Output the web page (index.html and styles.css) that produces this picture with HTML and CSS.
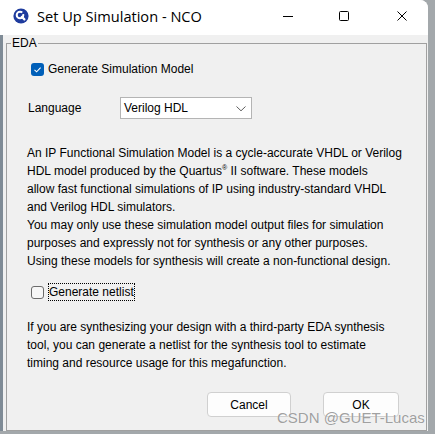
FILE: index.html
```html
<!DOCTYPE html>
<html>
<head>
<meta charset="utf-8">
<title>Set Up Simulation - NCO</title>
<link rel="stylesheet" href="styles.css">
</head>
<body>
<div class="window">
  <div class="titlebar">
    <svg class="app-icon" width="16" height="16" viewBox="0 0 16 16">
      <circle cx="8" cy="8" r="7.6" fill="#1f3c9e"/>
      <circle cx="7" cy="7" r="3.3" fill="none" stroke="#fff" stroke-width="2"/>
      <path d="M7 7 L12 1.5 L12.5 5.5 Z" fill="#1f3c9e"/>
      <line x1="8.8" y1="8.8" x2="11.4" y2="11.4" stroke="#fff" stroke-width="2.2" stroke-linecap="round"/>
    </svg>
    <span class="title">Set Up Simulation - NCO</span>
    <div class="controls">
      <svg class="ctl ctl-min" width="10" height="10" viewBox="0 0 10 10"><line x1="0" y1="5.5" x2="10" y2="5.5" stroke="#000" stroke-width="1"/></svg>
      <svg class="ctl ctl-max" width="10" height="10" viewBox="0 0 10 10"><rect x="0.5" y="0.5" width="9" height="9" rx="1" fill="none" stroke="#000" stroke-width="1"/></svg>
      <svg class="ctl ctl-close" width="10" height="10" viewBox="0 0 10 10"><path d="M0.5 0.5 L9.5 9.5 M9.5 0.5 L0.5 9.5" stroke="#000" stroke-width="1"/></svg>
    </div>
  </div>
  <div class="client">
    <fieldset class="group">
      <legend class="legend">EDA</legend>
      <label class="check-row model-row">
        <span class="box checked">
          <svg width="13" height="13" viewBox="0 0 13 13"><path d="M3.5 6.8 L5.6 8.8 L9.6 4.6" fill="none" stroke="#fff" stroke-width="1.1"/></svg>
        </span>
        <span class="check-label">Generate Simulation Model</span>
      </label>
      <div class="lang-row">
        <span class="lang-label">Language</span>
        <div class="combo">
          <span class="combo-value">Verilog HDL</span>
          <svg class="chevron" width="10" height="6" viewBox="0 0 10 6"><path d="M0.5 0.5 L5 4.8 L9.5 0.5" fill="none" stroke="#5f5f5f" stroke-width="1"/></svg>
        </div>
      </div>
      <p class="desc desc-first">An IP Functional Simulation Model is a cycle-accurate VHDL or Verilog<br>HDL model produced by the Quartus<sup class="reg">®</sup> II software. These models<br>allow fast functional simulations of IP using industry-standard VHDL<br>and Verilog HDL simulators.<br>You may only use these simulation model output files for simulation<br>purposes and expressly not for synthesis or any other purposes.<br>Using these models for synthesis will create a non-functional design.</p>
      <label class="check-row netlist-row">
        <span class="box"></span>
        <span class="check-label focus">Generate netlist</span>
      </label>
      <p class="desc desc-second">If you are synthesizing your design with a third-party EDA synthesis<br>tool, you can generate a netlist for the synthesis tool to estimate<br>timing and resource usage for this megafunction.</p>
      <div class="buttons">
        <button class="btn btn-cancel">Cancel</button>
        <button class="btn btn-ok">OK</button>
      </div>
    </fieldset>
  </div>
</div>
<div class="watermark">CSDN @GUET-Lucas</div>
</body>
</html>
```

FILE: styles.css
```css
* { box-sizing: border-box; }

html, body {
  margin: 0;
  padding: 0;
}

body {
  width: 435px;
  height: 434px;
  overflow: hidden;
  background: #a3a8ab;
  font-family: "Liberation Sans", Arial, sans-serif;
  font-size: 12px;
  color: #000;
  position: relative;
}

.window {
  width: 428px;
  height: 431px;
  background: #f0f0f0;
  border-top-right-radius: 8px;
  overflow: hidden;
  display: flex;
  flex-direction: column;
}

.titlebar {
  height: 35px;
  flex: none;
  background: #ffffff;
  display: flex;
  align-items: flex-start;
}

.app-icon {
  margin-left: 13px;
  margin-top: 8px;
  flex: none;
}

.title {
  margin-left: 8px;
  margin-top: 6px;
  font-family: "Open Sans", "Noto Sans", sans-serif;
  font-size: 14.6px;
  line-height: 20px;
  color: #000;
}

.controls {
  margin-left: auto;
  margin-top: 11px;
  margin-right: 21px;
  display: flex;
  align-items: flex-start;
}

.ctl { display: block; flex: none; }
.ctl-max { margin-left: 46px; }
.ctl-close { margin-left: 48px; }

.client {
  flex: 1;
  display: flex;
  border-left: 3px solid #7f8b96;
}

.group {
  flex: 1;
  margin: 1px 1px 0 3px;
  padding: 0;
  min-width: 0;
  border: 1px solid #a0a0a0;
  display: flex;
  flex-direction: column;
}

.legend {
  margin-left: 4px;
  padding: 0 1px;
  font-size: 12px;
  line-height: 14px;
}

.check-row {
  display: flex;
  align-items: center;
  padding-left: 24px;
}

.model-row {
  margin-top: 12px;
  height: 14px;
  line-height: 14px;
}

.box {
  width: 13px;
  height: 13px;
  flex: none;
  border: 1px solid #6b6b6b;
  border-radius: 3px;
  background: #f6f6f6;
}

.box.checked {
  border: none;
  background: #005fb8;
}

.box.checked svg { display: block; }

.check-label {
  margin-left: 4px;
  white-space: nowrap;
}

.lang-row {
  margin-top: 21px;
  height: 22px;
  display: flex;
  align-items: center;
  padding-left: 21px;
}

.lang-label {
  width: 92px;
  flex: none;
}

.combo {
  width: 132px;
  height: 22px;
  border: 1px solid #b4b4b4;
  background: #fff;
  display: flex;
  align-items: center;
  padding-left: 3px;
  padding-right: 5px;
}

.combo-value { flex: 1; }

.chevron { display: block; flex: none; margin-top: 1px; }

.desc {
  margin: 0;
  padding-left: 20px;
  line-height: 18px;
  white-space: nowrap;
}

.desc-first { margin-top: 25px; }

.reg {
  font-size: 7px;
  line-height: 0;
  vertical-align: 5px;
}

.netlist-row {
  margin-top: 13px;
  height: 18px;
}

.netlist-row .box {
  margin-top: 1px;
}

.focus {
  margin-left: 4px;
  padding: 2px 1px 2px 1px;
  line-height: 14px;
  outline: 1px dotted #000;
  outline-offset: -1px;
}

.desc-second { margin-top: 17px; }

.buttons {
  margin-top: 20px;
  display: flex;
  justify-content: flex-end;
  gap: 32px;
  padding-right: 27px;
}

.btn {
  height: 25px;
  border: 1px solid #d0d0d0;
  border-radius: 4px;
  background: #fdfdfd;
  font-family: "Liberation Sans", Arial, sans-serif;
  font-size: 12px;
  line-height: 12px;
  color: #000;
  padding: 0;
}

.btn-cancel { width: 84px; }
.btn-ok { width: 76px; }

.watermark {
  position: absolute;
  left: 277px;
  top: 411px;
  font-family: "Liberation Sans", Arial, sans-serif;
  font-size: 15px;
  line-height: 13px;
  color: rgba(135, 135, 135, 0.8);
  text-shadow: 0 0 1px rgba(255, 255, 255, 0.9);
  white-space: nowrap;
}
```
